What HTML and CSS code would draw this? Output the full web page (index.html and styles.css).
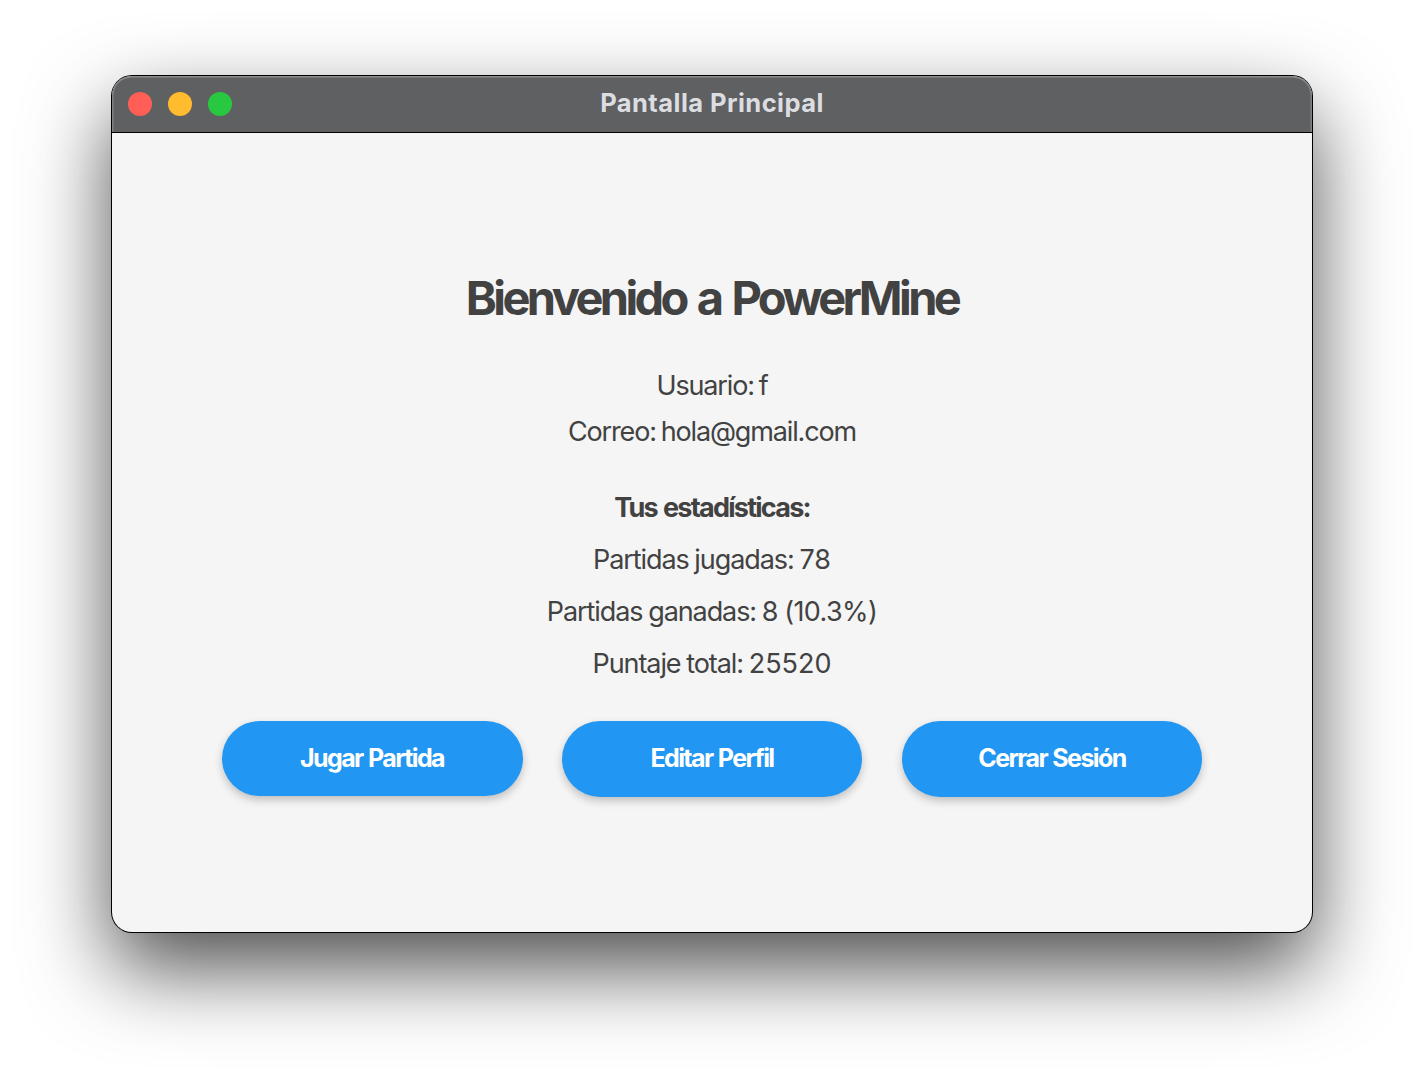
FILE: index.html
```
<!DOCTYPE html>
<html lang="es">
<head>
<meta charset="utf-8">
<title>Pantalla Principal</title>
<link rel="stylesheet" href="styles.css">
</head>
<body>
<main class="window">
  <header class="titlebar">
    <div class="controls">
      <span class="dot dot-close"></span>
      <span class="dot dot-minimize"></span>
      <span class="dot dot-zoom"></span>
    </div>
    <span class="window-title">Pantalla Principal</span>
  </header>
  <section class="content">
    <h1 class="heading">Bienvenido a PowerMine</h1>
    <div class="account">
      <p class="line">Usuario: f</p>
      <p class="line">Correo: hola@gmail.com</p>
    </div>
    <div class="stats">
      <h2 class="stats-title">Tus estadísticas:</h2>
      <p class="line">Partidas jugadas: <span class="value">78</span></p>
      <p class="line">Partidas ganadas: <span class="value">8 <span class="percent">(10.3%)</span></span></p>
      <p class="line">Puntaje total: <span class="value">25520</span></p>
    </div>
    <div class="actions">
      <button class="button button-focused">Jugar Partida</button>
      <button class="button">Editar Perfil</button>
      <button class="button">Cerrar Sesión</button>
    </div>
  </section>
</main>
</body>
</html>
```
FILE: styles.css
```
* { box-sizing: border-box; }
body {
  margin: 0;
  height: 1080px;
  overflow: hidden;
  padding: 76px 112px 0;
  background: #fff;
  font-family: Inter, "Liberation Sans", sans-serif;
  color: #424242;
}
.window {
  width: 1200px;
  height: 856px;
  border-radius: 20px;
  background: #f5f5f5;
  box-shadow: 0 0 0 1px #000, 0 36px 84px rgba(0, 0, 0, 0.7);
}
.titlebar {
  display: grid;
  grid-template-columns: 1fr auto 1fr;
  align-items: center;
  height: 57px;
  padding: 0 16px;
  border-bottom: 1px solid #000;
  border-radius: 20px 20px 0 0;
  background: #5f6062;
  box-shadow: inset 0 2px 0 -0.5px #8b8c8e, inset 1.5px 0 0 #808183, inset -1.5px 0 0 #808183;
}
.controls { display: flex; gap: 16px; }
.dot { width: 24px; height: 24px; border-radius: 50%; }
.dot-close { background: #ff5f57; }
.dot-minimize { background: #febc2e; }
.dot-zoom { background: #28c840; }
.window-title {
  height: 56px;
  color: #dcdde0;
  font-size: 25.5px;
  font-weight: 700;
  line-height: 54px;
  letter-spacing: 0.45px;
}
.content {
  display: flex;
  flex-direction: column;
  align-items: center;
  padding-top: 136px;
}
.heading {
  margin: 0 0 36px;
  font-size: 47px;
  font-weight: 700;
  line-height: 58px;
  letter-spacing: -3.6px;
  word-spacing: 3.4px;
}
.line {
  margin: 0;
  font-size: 27px;
  line-height: 46px;
  letter-spacing: -1.15px;
  word-spacing: -1.6px;
  text-align: center;
}
.value { letter-spacing: 0; word-spacing: -1.8px; }
.percent { letter-spacing: -0.57px; }
.stats { margin: 27px 0 31px; }
.stats .line { line-height: 52px; letter-spacing: -1.08px; word-spacing: -0.8px; }
.stats .value { letter-spacing: 0; }
.stats .percent { letter-spacing: -0.62px; }
.stats-title {
  margin: 0;
  font-size: 27px;
  font-weight: 700;
  line-height: 52px;
  letter-spacing: -1.75px;
  word-spacing: 1.5px;
  text-align: center;
}
.actions { display: flex; gap: 40px; }
.button {
  width: 300px;
  height: 76px;
  padding: 0 0 2px;
  border: 0;
  border-radius: 38px;
  background: #2196f3;
  box-shadow: 0 4px 8px rgba(0, 0, 0, 0.22);
  color: #fff;
  font: 700 25px/1 Inter, "Liberation Sans", sans-serif;
  letter-spacing: -1.6px;
  word-spacing: 1px;
}
.button-focused {
  width: 301px;
  height: 75px;
  margin: -0.5px -0.5px 0;
  padding: 0;
}
```
